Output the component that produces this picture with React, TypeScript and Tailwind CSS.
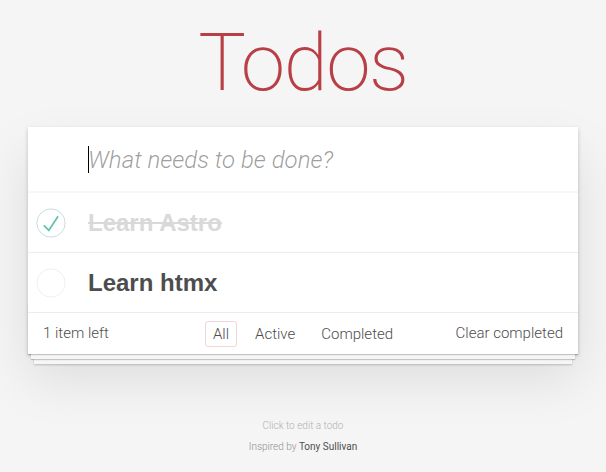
import React from "react";

const todos = [
  { id: 1, title: "Learn Astro", done: true },
  { id: 2, title: "Learn htmx", done: false },
];

function Toggle({ done }: { done: boolean }) {
  return (
    <svg width="30" height="30" viewBox="-2 -2 104 104" className="shrink-0">
      <circle cx="50" cy="50" r="49" fill="none" stroke={done ? "#bddad5" : "#ededed"} strokeWidth="3" />
      {done && <path fill="#5dc2af" d="M72 25L42 71 27 56l-4 4 20 20 34-52z" />}
    </svg>
  );
}

export default function App() {
  const font = "font-['Roboto','Liberation_Sans',Arial,sans-serif]";
  return (
    <div className={`min-h-screen bg-[#f5f5f5] ${font} font-light text-[#111] text-[14px]`}>
      <div className="w-[550px] mx-auto pt-[23px]">
        <h1 className="h-[80px] leading-[80px] text-center text-[80px] font-extralight tracking-[-1.5px] text-[#b83f45] mb-[24px]">
          Todos
        </h1>

        <section className="bg-white shadow-[0_2px_4px_0_rgba(0,0,0,0.2),0_25px_50px_0_rgba(0,0,0,0.1)]">
          <div className="relative h-[66px] shadow-[inset_0_-2px_1px_rgba(0,0,0,0.03)] flex items-center">
            <input
              className="w-full h-full pl-[60px] pr-4 bg-transparent outline-none text-[24px] placeholder:italic placeholder:text-[rgba(0,0,0,0.4)] placeholder:font-light"
              placeholder="What needs to be done?"
            />
            <span className="absolute left-[60px] top-[19px] w-px h-[27px] bg-black" />
          </div>

          <ul>
            {todos.map((t) => (
              <li key={t.id} className="h-[60px] border-b border-[#ededed] flex items-center">
                <div className="w-[60px] pl-[8px] flex">
                  <Toggle done={t.done} />
                </div>
                <span
                  className={`font-['Liberation_Sans',Arial,sans-serif] text-[24px] font-bold ${
                    t.done ? "text-[#d9d9d9] line-through" : "text-[#4d4d4d]"
                  }`}
                >
                  {t.title}
                </span>
              </li>
            ))}
          </ul>

          <footer className="relative h-[41px] px-[15px] grid grid-cols-[1fr_auto_1fr] items-center text-[15px] text-[#4d4d4d] before:content-[''] before:absolute before:inset-x-0 before:bottom-0 before:h-[50px] before:pointer-events-none before:shadow-[0_1px_1px_rgba(0,0,0,0.2),0_8px_0_-3px_#f6f6f6,0_9px_1px_-3px_rgba(0,0,0,0.2),0_16px_0_-6px_#f6f6f6,0_17px_2px_-6px_rgba(0,0,0,0.2)]">
            <span className="text-left">1 item left</span>
            <ul className="flex items-center gap-[10px]">
              <li className="px-[7px] py-[3px] leading-[18px] border border-[rgba(175,47,47,0.2)] rounded-[3px]">All</li>
              <li className="px-[7px] py-[3px] leading-[18px] border border-transparent">Active</li>
              <li className="px-[7px] py-[3px] leading-[18px] border border-transparent">Completed</li>
            </ul>
            <span className="text-right">Clear completed</span>
          </footer>
        </section>

        <footer className="mt-[66px] text-center text-[10px] leading-[11px] text-[#b0b0b0]">
          <p className="my-[10px]">Click to edit a todo</p>
          <p className="my-[10px] text-[#8f8f8f]">
            Inspired by <span className="text-[#4d4d4d] font-normal">Tony Sullivan</span>
          </p>
        </footer>
      </div>
    </div>
  );
}
